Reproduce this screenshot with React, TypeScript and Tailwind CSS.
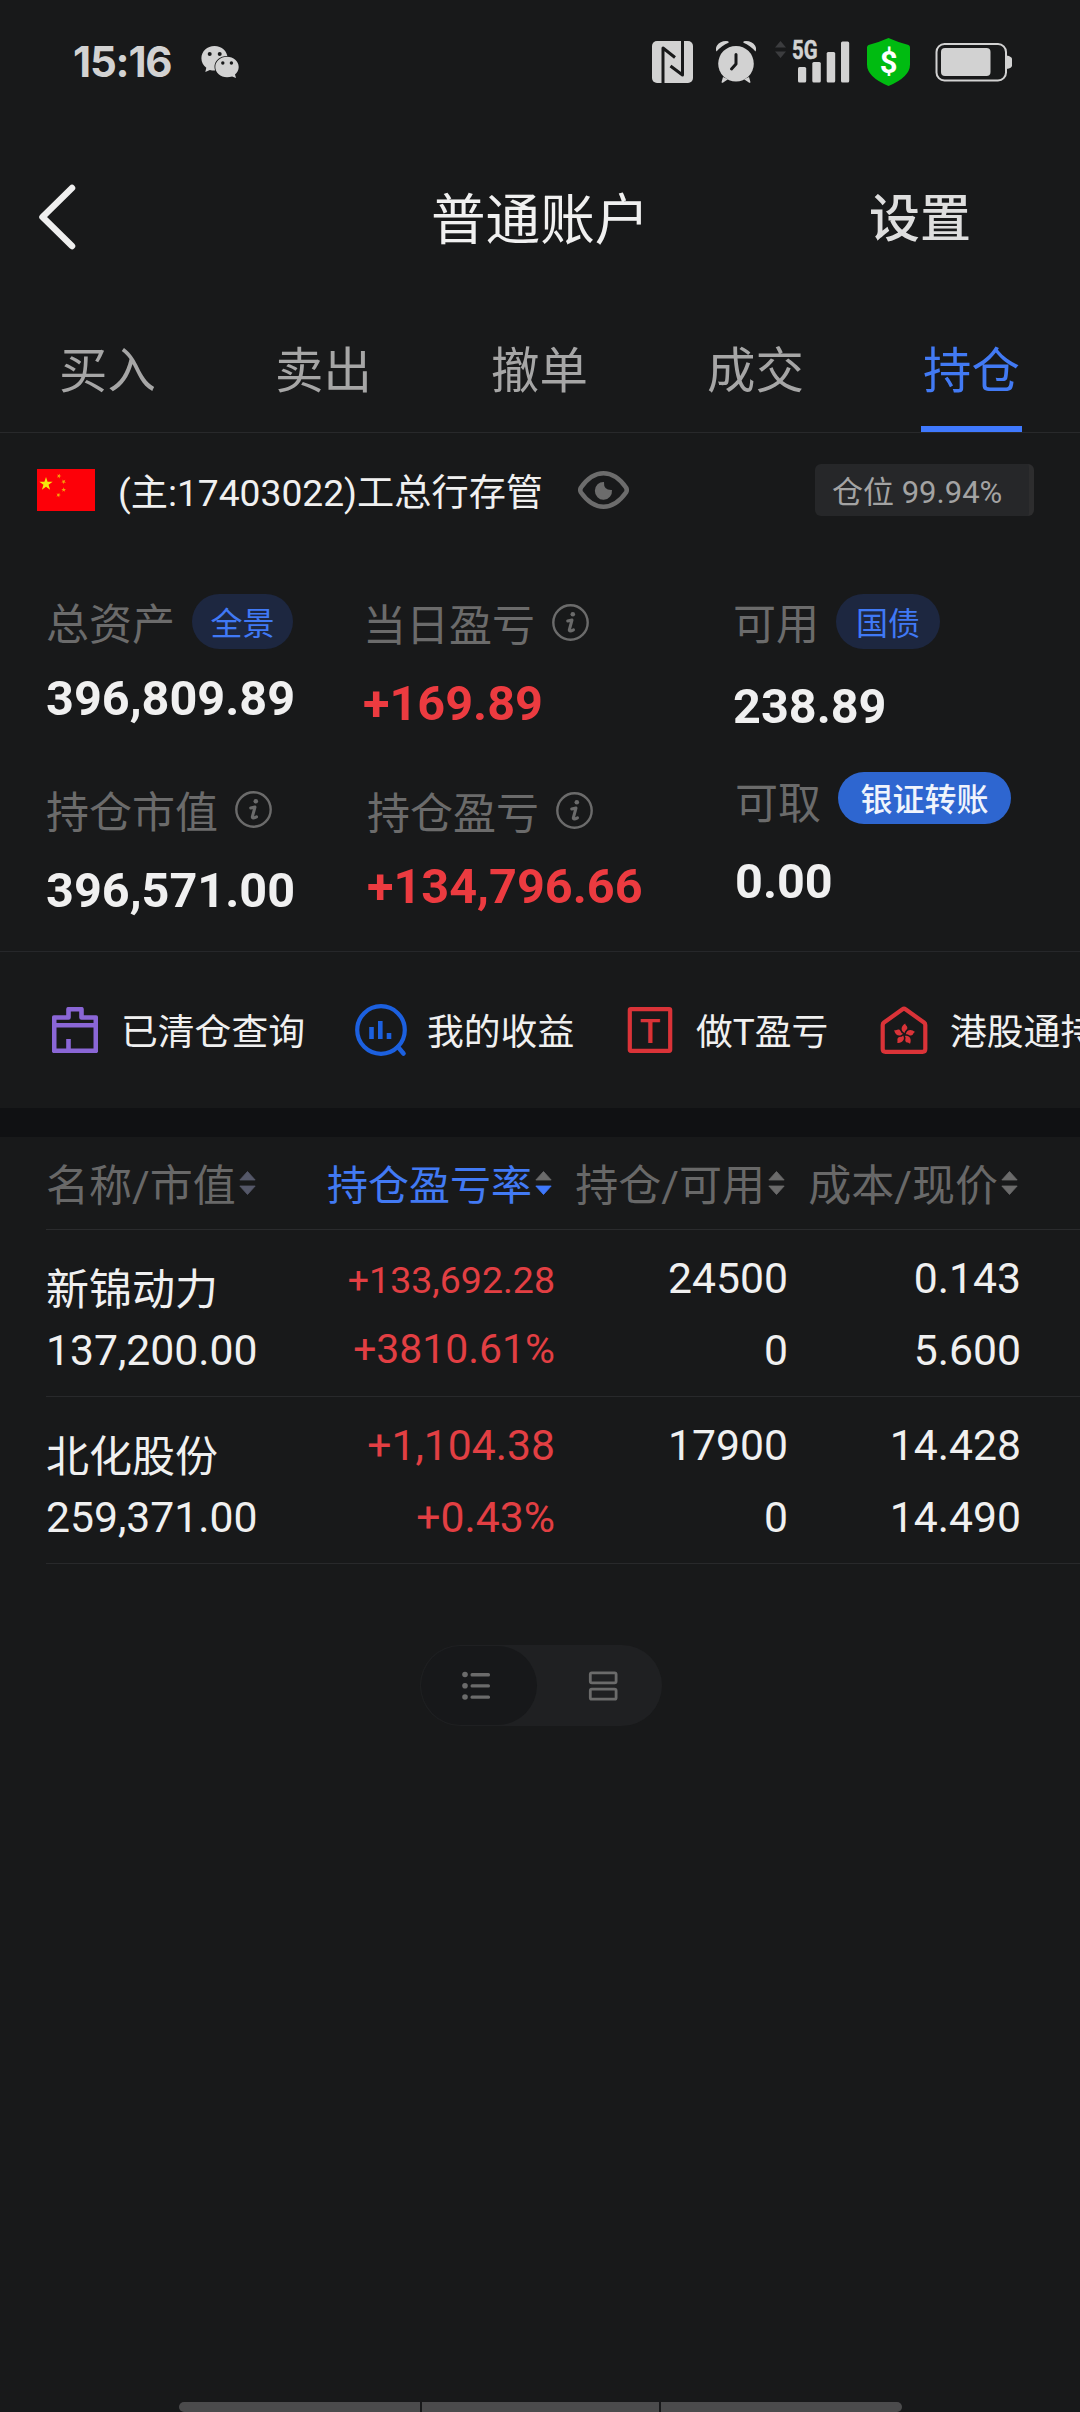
import React from "react";

const STAR =
  "M0 -1 L0.2245 -0.309 L0.951 -0.309 L0.363 0.118 L0.588 0.809 L0 0.382 L-0.588 0.809 L-0.363 0.118 L-0.951 -0.309 L-0.2245 -0.309 Z";

function StatusBar() {
  return (
    <div className="flex h-[124px] items-center pl-[73px]">
      <span className="w-[128px] font-[Inter] text-[42px] leading-[48px] font-bold tracking-[-1.2px] text-[#d2d2d2]">
        15:16
      </span>
      <svg className="h-[33px] w-[38px]" viewBox="201 46 38 33" fill="#d2d2d2">
        <path d="M214.5 46c7.3 0 13.1 5.3 13.1 12.3s-5.8 12.3-13.1 12.3c-1.700 0-3.200-.2-4.600-.7l-4.600 2.100 1-4.300c-3.200-2.200-4.900-5.500-4.900-9.400 0-7 5.800-12.300 13.100-12.300z" />
        <path
          d="M227 56.700c6.500 0 11.700 4.500 11.700 10.200 0 3-1.500 5.700-3.700 7.600l1 3.600-3.900-1.700c-1.500.5-3.300.8-5.100.8-6.500 0-11.700-4.600-11.700-10.300s5.200-10.200 11.700-10.200z"
          stroke="#18191a"
          strokeWidth="1.600"
          paintOrder="stroke"
        />
        <g fill="#18191a">
          <circle cx="209.700" cy="54" r="2" />
          <circle cx="219.700" cy="54" r="2" />
          <circle cx="222.800" cy="63" r="1.700" />
          <circle cx="231.400" cy="63" r="1.700" />
        </g>
      </svg>
      {/* NFC */}
      <svg className="ml-[413px] h-[42px] w-[41px]" viewBox="0 0 41 42">
        <rect width="41" height="42" rx="5" fill="#d2d2d2" />
        <path
          d="M11 42V7l12 9.500M30.500 0v34L18.500 25"
          fill="none"
          stroke="#18191a"
          strokeWidth="3"
          strokeLinejoin="round"
        />
      </svg>
      {/* Alarm clock */}
      <svg className="ml-[23px] h-[42px] w-[40px]" viewBox="716 41 40 42">
        <g fill="#d2d2d2">
          <circle cx="736" cy="63.700" r="17.800" />
          <path d="M716.500 51.500q-1.500-2.500.5-6 3-4.500 9-4.500 3.500.2 2.500 1.700-6.500 2.500-12 8.800z" />
          <path d="M755.500 51.500q1.500-2.500-.5-6-3-4.500-9-4.500-3.500.2-2.500 1.700 6.500 2.500 12 8.800z" />
          <path d="M723 77l-1.500 5.200q.8 1.200 2 0l4.500-3zM749 77l1.500 5.200q-.8 1.200-2 0l-4.500-3z" />
        </g>
        <path
          d="M736 54.500v9.500l-4.500 5"
          fill="none"
          stroke="#18191a"
          strokeWidth="3"
          strokeLinecap="round"
          strokeLinejoin="round"
        />
      </svg>
      {/* Cellular signal */}
      <svg className="ml-[19px] h-[62px] w-[75px]" viewBox="775 31 75 62">
        <path d="M780.500 41l5.500 6.500h-11zM780.500 58l5.500-6.500h-11z" fill="#3b3c3e" />
        <text
          x="792"
          y="59"
          textLength="25.500"
          lengthAdjust="spacingAndGlyphs"
          fontFamily="Roboto"
          fontWeight="700"
          fontSize="25"
          fill="#d2d2d2"
          stroke="#d2d2d2"
          strokeWidth=".5"
        >
          5G
        </text>
        <g fill="#d2d2d2">
          <rect x="798" y="67" width="8.200" height="15.500" rx="1.500" />
          <rect x="812.300" y="62" width="8.500" height="20.500" rx="1.500" />
          <rect x="826.700" y="52" width="8.500" height="30.500" rx="1.500" />
          <rect x="841" y="41.500" width="8.200" height="41" rx="1.500" />
        </g>
      </svg>
      {/* Payment shield */}
      <svg className="ml-[17px] h-[48px] w-[43px]" viewBox="867 38 43 48">
        <path
          d="M888.500 38q10 4.500 20 7 1.500.5 1.500 2.500v17q0 12.500-21.500 21.500-21.500-9-21.500-21.500v-17q0-2 1.500-2.500 10-2.500 20-7z"
          fill="#00bb11"
        />
        <text
          x="888.700"
          y="73"
          textAnchor="middle"
          fontFamily="Roboto"
          fontWeight="700"
          fontSize="31"
          fill="#fff"
        >
          $
        </text>
      </svg>
      <svg className="ml-[25px] h-[40px] w-[78px]" viewBox="935 43 78 40">
        <rect x="936.500" y="45" width="69.500" height="36.500" rx="8" fill="none" stroke="#d2d2d2" strokeWidth="2" />
        <rect x="941" y="49" width="49.500" height="28" rx="4" fill="#d2d2d2" />
        <path d="M1006.500 56.500q5.500 1 5.500 3.500v6.500q0 2.500-5.500 3.500z" fill="#d2d2d2" />
      </svg>
    </div>
  );
}

function Header() {
  return (
    <div className="flex h-[192px] items-center">
      <svg className="mb-[6px] ml-[37px] h-[68px] w-[40px]" viewBox="0 0 40 68">
        <path
          d="M35 5L5.500 34 35 63"
          fill="none"
          stroke="#efefef"
          strokeWidth="6.500"
          strokeLinecap="round"
          strokeLinejoin="round"
        />
      </svg>
      <h1 className="ml-[354px] w-[219px] text-[54.6px] leading-[60px] font-normal text-[#f0f0f0]">普通账户</h1>
      <span className="ml-[219px] text-[51px] leading-[60px] font-medium text-[#dedede]">设置</span>
    </div>
  );
}

const TABS = ["买入", "卖出", "撤单", "成交", "持仓"];

function Tabs() {
  return (
    <nav className="grid h-[117px] grid-cols-5 border-b border-[#28292b]">
      {TABS.map((t) => {
        const active = t === "持仓";
        return (
          <div
            key={t}
            className={`flex flex-col items-center justify-between pt-[26px] pr-[1px] text-[48.4px] leading-[60px] ${
              active ? "text-[#427af4]" : "text-[#a6a6a6]"
            }`}
          >
            {t}
            {active && <div className="mr-[1px] h-[6px] w-[101px] bg-[#3f79fe]" />}
          </div>
        );
      })}
    </nav>
  );
}

function AccountRow() {
  return (
    <div className="flex h-[114px] items-center pl-[37px]">
      <svg className="h-[42px] w-[58px]" viewBox="37 469 58 42">
        <rect x="37" y="469" width="58" height="42" fill="#fd0008" />
        <g fill="#f4e80c">
          <path d={STAR} transform="translate(46 484) scale(7)" />
          <g fill="#f5a30a">
            <path d={STAR} transform="translate(59 476) rotate(20) scale(2.500)" />
            <path d={STAR} transform="translate(63.700 481.700) rotate(40) scale(2.500)" />
            <path d={STAR} transform="translate(63.700 489.700) scale(2.500)" />
            <path d={STAR} transform="translate(58.500 495) rotate(20) scale(2.500)" />
          </g>
        </g>
      </svg>
      <span className="ml-[23px] w-[459px] pt-[5px] text-[37.2px] leading-[44px] whitespace-nowrap text-[#f0f0f0]">
        (主:17403022)工总行存管
      </span>
      <svg className="h-[40px] w-[52px]" viewBox="577 470 52 40">
        <path
          d="M581 487.500Q591 473.300 603.500 473.300T626 487.500Q627.500 490 626 492.500 616 506.700 603.500 506.700T581 492.500Q579.500 490 581 487.500z"
          fill="none"
          stroke="#6c6c6c"
          strokeWidth="4.600"
        />
        <path d="M604 482Q603.500 490.500 612 490a8.600 8.900 0 1 1-8-8z" fill="#6c6c6c" />
      </svg>
      <div className="ml-[186px] flex h-[52px] w-[219px] items-center overflow-hidden rounded-[6px] border-r-[5px] border-[#2d2d2e] bg-[#262729] pt-[6px] pl-[17px] text-[31px] leading-[36px] whitespace-pre text-[#a3a3a3]">
        仓位 99.94%
      </div>
    </div>
  );
}

function Info() {
  return (
    <svg className="mt-[2px] h-[37px] w-[37px] shrink-0" viewBox="-18.500 -18.500 37 37">
      <circle r="17.200" fill="none" stroke="#6b6b6b" strokeWidth="2.400" />
      <circle cx="2.300" cy="-8.200" r="2.300" fill="#6b6b6b" />
      <path
        d="M-2.800-1.500L1.500-2.500-1.200 7.500Q-1.300 9.500 3 7.300"
        fill="none"
        stroke="#6b6b6b"
        strokeWidth="3"
        strokeLinecap="round"
        strokeLinejoin="round"
      />
    </svg>
  );
}

const label = "text-[43px] leading-[48px] whitespace-nowrap text-[#6b6b6b]";
const figure = "text-[48.6px] leading-[56px] font-bold whitespace-nowrap";

function Summary() {
  return (
    <section className="grid h-[405px] grid-cols-[317px_370px_1fr] border-b border-[#26272a] pl-[46px]">
      <div>
        <div className="mt-[47px] flex h-[55px]">
          <span className={`${label} pt-[7px]`}>总资产</span>
          <span className="ml-[17px] flex h-[55px] w-[101px] items-center justify-center rounded-full bg-[#1d2740] pt-[5px] text-[32px] leading-none text-[#4079f5]">
            全景
          </span>
        </div>
        <div className={`${figure} mt-[22px] text-[#f0f0f0]`}>396,809.89</div>
        <div className="mt-[62px] flex h-[48px] gap-[17px]">
          <span className={label}>持仓市值</span>
          <Info />
        </div>
        <div className={`${figure} mt-[26px] text-[#f0f0f0]`}>396,571.00</div>
      </div>
      <div>
        <div className="mt-[55px] flex h-[48px] gap-[17px]">
          <span className={label}>当日盈亏</span>
          <Info />
        </div>
        <div className={`${figure} mt-[26px] text-[#ec3b40]`}>+169.89</div>
        <div className="mt-[58px] flex h-[48px] gap-[17px] pl-[4px]">
          <span className={label}>持仓盈亏</span>
          <Info />
        </div>
        <div className={`${figure} mt-[21px] pl-[4px] text-[#ec3b40]`}>+134,796.66</div>
      </div>
      <div>
        <div className="mt-[47px] flex h-[55px]">
          <span className={`${label} pt-[7px]`}>可用</span>
          <span className="ml-[17px] flex h-[55px] w-[104px] items-center justify-center rounded-full bg-[#1d2740] pt-[5px] text-[32px] leading-none text-[#4079f5]">
            国债
          </span>
        </div>
        <div className={`${figure} mt-[30px] text-[#f0f0f0]`}>238.89</div>
        <div className="mt-[37px] flex h-[52px] pl-[2px]">
          <span className={`${label} pt-[8px]`}>可取</span>
          <span className="ml-[17px] flex h-[52px] w-[173px] items-center justify-center rounded-full bg-[#2e66d0] pt-[3px] text-[32px] leading-none font-medium text-[#f0f4fc]">
            银证转账
          </span>
        </div>
        <div className={`${figure} mt-[30px] pl-[2px] text-[#f0f0f0]`}>0.00</div>
      </div>
    </section>
  );
}

function Shortcuts() {
  const text = "shrink-0 pt-[5px] text-[36.8px] leading-[44px] whitespace-nowrap text-[#f0f0f0]";
  return (
    <section className="flex h-[156px] items-center overflow-hidden pl-[52px]">
      <svg className="h-[46px] w-[46px] shrink-0" viewBox="52 1007 46 46">
        <path
          d="M54.200 1017.500H68.500V1009.200H81.500V1017.500H95.800V1050.800H54.200ZM54.200 1025.200H95.800M68.500 1039V1050"
          fill="none"
          stroke="#8a66d6"
          strokeWidth="4.600"
          strokeLinejoin="round"
        />
      </svg>
      <span className={`${text} ml-[23px] w-[234px]`}>已清仓查询</span>
      <svg className="h-[54px] w-[54px] shrink-0" viewBox="355 1003 54 54">
        <g fill="none" stroke="#1c60df" strokeWidth="4.200">
          <circle cx="381" cy="1030" r="23.800" />
          <path d="M398 1047l5.500 6.500" strokeLinecap="round" strokeWidth="4.600" />
          <path d="M371.500 1027v12M380.300 1021v18M389 1033v6" strokeWidth="4.600" />
        </g>
      </svg>
      <span className={`${text} ml-[18px] w-[200px]`}>我的收益</span>
      <svg className="h-[46px] w-[46px] shrink-0" viewBox="627 1007 46 46">
        <rect x="629.800" y="1009.200" width="40.400" height="41.600" rx="1" fill="none" stroke="#da3338" strokeWidth="4.200" />
        <text
          x="650"
          y="1042.500"
          textAnchor="middle"
          fontFamily="Roboto"
          fontWeight="500"
          fontSize="34"
          fill="#da3338"
        >
          T
        </text>
      </svg>
      <span className={`${text} ml-[23px] w-[184px]`}>做T盈亏</span>
      <svg className="h-[50px] w-[48px] shrink-0" viewBox="880 1004 48 50">
        <path
          d="M902.500 1008.300Q904 1007 905.500 1008.300L924 1021.500Q925.300 1022.500 925.300 1024V1048Q925.300 1050.800 922.500 1050.800H885.500Q882.700 1050.800 882.700 1048V1024Q882.700 1022.500 884 1021.500Z"
          fill="none"
          stroke="#da3338"
          strokeWidth="4.200"
          strokeLinejoin="round"
        />
        {[0, 72, 144, 216, 288].map((a) => (
          <path
            key={a}
            d="M.3-1.500C-4-3.500-3.500-8.500 1-11 .8-9 3.600-8.500 3-6 2.600-4.300.3-4 .3-1.500z"
            transform={`translate(904.300 1033.500) rotate(${a})`}
            fill="#da3338"
          />
        ))}
      </svg>
      <span className={`${text} ml-[22px]`}>港股通持仓</span>
    </section>
  );
}

function Sort({ up, down }: { up: string; down: string }) {
  return (
    <svg className="mt-[9px] h-[24px] w-[17px] shrink-0" viewBox="0 0 17 24">
      <path d="M8.500 .5L16.200 9H.8z" fill={up} stroke={up} strokeWidth=".8" strokeLinejoin="round" />
      <path d="M8.500 23.500L16.200 15H.8z" fill={down} stroke={down} strokeWidth=".8" strokeLinejoin="round" />
    </svg>
  );
}

const COLS = "grid grid-cols-[254px_255px_233px_233px]";

function TableHead() {
  return (
    <div className={`${COLS} ml-[46px] h-[93px] border-b border-[#2a2b2d] pt-[25px] text-[43px] leading-[48px] whitespace-nowrap text-[#686868]`}>
      <div className="flex gap-[3px]">
        名称/市值
        <Sort up="#555869" down="#555869" />
      </div>
      <div className="flex justify-end gap-[3px] pr-[3px] text-[41px] text-[#427af4]">
        持仓盈亏率
        <Sort up="#6b6b6b" down="#3f79fe" />
      </div>
      <div className="flex justify-end gap-[3px] pr-[3px]">
        持仓/可用
        <Sort up="#6b6b6b" down="#6b6b6b" />
      </div>
      <div className="flex justify-end gap-[3px] pr-[3px]">
        成本/现价
        <Sort up="#6b6b6b" down="#6b6b6b" />
      </div>
    </div>
  );
}

const HOLDINGS = [
  {
    name: "新锦动力",
    value: "137,200.00",
    profit: "+133,692.28",
    rate: "+3810.61%",
    profitClass: "pt-[2px] text-[37.5px]",
    rateClass: "text-[40.9px] -mt-[3px]",
    held: "24500",
    usable: "0",
    cost: "0.143",
    price: "5.600",
  },
  {
    name: "北化股份",
    value: "259,371.00",
    profit: "+1,104.38",
    rate: "+0.43%",
    profitClass: "",
    rateClass: "",
    held: "17900",
    usable: "0",
    cost: "14.428",
    price: "14.490",
  },
];

function Holdings() {
  return (
    <>
      {HOLDINGS.map((h) => (
        <div key={h.name} className={`${COLS} ml-[46px] h-[167px] border-b border-[#28292b] text-[42.7px] text-[#f0f0f0]`}>
          <div className="pt-[36px] leading-[48px]">
            <div className="text-[43px]">{h.name}</div>
            <div className="mt-[12px]">{h.value}</div>
          </div>
          <div className="pt-[12px] text-right leading-[72px] text-[#e23f43]">
            <div className={h.profitClass}>{h.profit}</div>
            <div className={h.rateClass}>{h.rate}</div>
          </div>
          <div className="pt-[12px] text-right leading-[72px]">
            <div>{h.held}</div>
            <div>{h.usable}</div>
          </div>
          <div className="pt-[12px] text-right leading-[72px]">
            <div>{h.cost}</div>
            <div>{h.price}</div>
          </div>
        </div>
      ))}
    </>
  );
}

function ViewToggle() {
  return (
    <div className="mt-[81px] ml-[420px] flex h-[81px] w-[242px] items-center rounded-full bg-[#1f2022] p-[1px]">
      <div className="flex h-[79px] w-[116px] items-center rounded-full bg-[#17181a] pl-[40px]">
        <svg className="h-[30px] w-[30px]" viewBox="0 0 30 30">
          <g fill="#6b6b6b">
            <circle cx="4" cy="3.500" r="2.800" />
            <circle cx="4" cy="14.800" r="2.800" />
            <circle cx="4" cy="26" r="2.800" />
            <rect x="9.500" y="2" width="19.500" height="3.400" rx="1.500" />
            <rect x="9.500" y="13.200" width="19.500" height="3.400" rx="1.500" />
            <rect x="9.500" y="24.400" width="19.500" height="3.400" rx="1.500" />
          </g>
        </svg>
      </div>
      <svg className="ml-[51px] h-[30px] w-[30px]" viewBox="0 0 30 30">
        <g fill="none" stroke="#6b6b6b" strokeWidth="2.800">
          <rect x="2.300" y="1.800" width="25.800" height="10" rx="1.500" />
          <rect x="2.300" y="18.200" width="25.800" height="10" rx="1.500" />
        </g>
      </svg>
    </div>
  );
}

export default function App() {
  return (
    <div className="flex h-[2412px] w-[1080px] flex-col overflow-hidden bg-[#18191a] font-[Roboto,'Noto_Sans_CJK_SC',sans-serif]">
      <StatusBar />
      <Header />
      <Tabs />
      <AccountRow />
      <Summary />
      <Shortcuts />
      <div className="h-[29px] bg-[#101113]" />
      <TableHead />
      <Holdings />
      <ViewToggle />
      <div className="mt-auto ml-[179px] flex h-[10px] w-[723px] gap-[2px] overflow-hidden rounded-[5px]">
        <div className="w-[241px] bg-[#4b4b4c]" />
        <div className="w-[237px] bg-[#4b4b4c]" />
        <div className="flex-1 bg-[#4b4b4c]" />
      </div>
    </div>
  );
}
